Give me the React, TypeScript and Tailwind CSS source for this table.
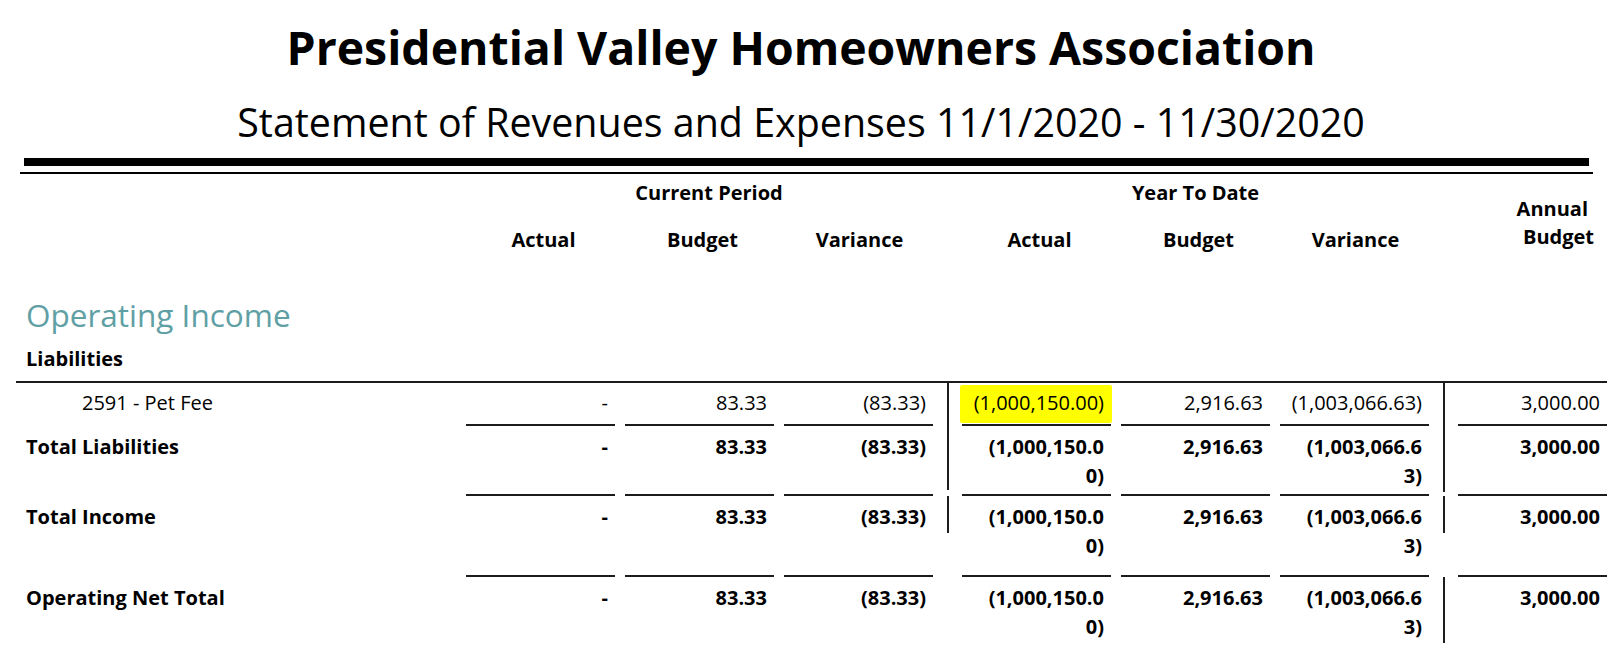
import React from 'react';

type Row = {
  label: string;
  indent?: boolean;
  bold?: boolean;
  values: string[];
  height: string;
  pad: string;
  underline: boolean;
  sepA: string | null;
  sepB: string | null;
};

const rows: Row[] = [
  {
    label: '2591 - Pet Fee',
    indent: true,
    values: ['-', '83.33', '(83.33)', '(1,000,150.00)', '2,916.63', '(1,003,066.63)', '3,000.00'],
    height: 'h-[43px]',
    pad: 'pt-[5px]',
    underline: true,
    sepA: 'h-full',
    sepB: 'h-full',
  },
  {
    label: 'Total Liabilities',
    bold: true,
    values: ['-', '83.33', '(83.33)', '(1,000,150.0\n0)', '2,916.63', '(1,003,066.6\n3)', '3,000.00'],
    height: 'h-[70px]',
    pad: 'pt-[6px]',
    underline: true,
    sepA: 'h-[64px]',
    sepB: 'h-[66px]',
  },
  {
    label: 'Total Income',
    bold: true,
    values: ['-', '83.33', '(83.33)', '(1,000,150.0\n0)', '2,916.63', '(1,003,066.6\n3)', '3,000.00'],
    height: 'h-[81px]',
    pad: 'pt-[6px]',
    underline: true,
    sepA: 'h-[37px]',
    sepB: 'h-[37px]',
  },
  {
    label: 'Operating Net Total',
    bold: true,
    values: ['-', '83.33', '(83.33)', '(1,000,150.0\n0)', '2,916.63', '(1,003,066.6\n3)', '3,000.00'],
    height: 'h-[82px]',
    pad: 'pt-[6px]',
    underline: false,
    sepA: null,
    sepB: 'h-[66px]',
  },
];

function Cell({ value, row, highlight }: { value: string; row: Row; highlight?: boolean }) {
  return (
    <div className="w-[159px] px-[5px] h-full">
      <div
        className={`relative h-full text-right pr-[7px] whitespace-pre-line ${row.pad} ${
          row.underline ? 'border-b-2 border-[#1c1c1c]' : ''
        }`}
      >
        {highlight && <div className="absolute left-[-2px] top-[2px] w-[152px] h-[38px] bg-[#ffff00] rounded-[2px]" />}
        <span className="relative">{value}</span>
      </div>
    </div>
  );
}

function Sep({ h }: { h: string | null }) {
  return (
    <div className="w-[19px] pl-[9px] h-full">
      {h && <div className={`w-[2px] bg-[#1c1c1c] ${h}`} />}
    </div>
  );
}

export default function App() {
  return (
    <div className="w-[1621px] h-[659px] overflow-hidden bg-white text-black font-['Open_Sans',sans-serif]">
      {/* Heading */}
      <div className="w-[1602px] pt-[19px] text-center">
        <h1 className="text-[46.4px] leading-[56px] font-bold">Presidential Valley Homeowners Association</h1>
        <h2 className="mt-[23px] text-[39.4px] leading-[48px]">
          Statement of Revenues and Expenses 11/1/2020 - 11/30/2020
        </h2>
      </div>
      <div className="mt-[12px] ml-[24px] w-[1565px] h-[8px] bg-black" />
      <div className="mt-[6px] ml-[20px] w-[1573px] h-[2px] bg-black" />

      {/* Column headers */}
      <div className="mt-[5px] ml-[16px] flex text-[20px] leading-[28px] font-bold">
        <div className="w-[445px]" />
        <div className="w-[496px] flex flex-col">
          <div className="text-center">Current Period</div>
          <div className="mt-[19px] flex">
            <div className="w-[159px] pl-[6px] text-center">Actual</div>
            <div className="w-[159px] pl-[6px] text-center">Budget</div>
            <div className="w-[159px] pl-[2px] text-center">Variance</div>
            <div className="w-[19px]" />
          </div>
        </div>
        <div className="w-[477px] flex flex-col">
          <div className="text-center">Year To Date</div>
          <div className="mt-[19px] flex">
            <div className="w-[159px] pl-[6px] text-center">Actual</div>
            <div className="w-[159px] pl-[6px] text-center">Budget</div>
            <div className="w-[159px] pl-[2px] text-center">Variance</div>
          </div>
        </div>
        <div className="w-[19px]" />
        <div className="w-[159px] pt-[16px] pr-[18px] text-right">
          <div className="pr-[6px]">Annual</div>
          <div>Budget</div>
        </div>
      </div>

      {/* Section */}
      <div className="ml-[16px] pl-[10px]">
        <div className="mt-[41px] text-[31.5px] leading-[40px] text-[#5fa0a5]">Operating Income</div>
        <div className="mt-[10px] text-[20px] leading-[28px] font-bold">Liabilities</div>
      </div>

      <div className="mt-[8px] ml-[16px] w-[1591px] border-t-2 border-[#1c1c1c]" />
      <div className="ml-[16px] text-[20px] leading-[29px]">
        {rows.map((row, i) => (
          <div key={i} className={`flex ${row.height} ${row.bold ? 'font-bold' : ''}`}>
            <div className={`w-[445px] ${row.pad} ${row.indent ? 'pl-[66px]' : 'pl-[10px]'}`}>{row.label}</div>
            <Cell value={row.values[0]} row={row} />
            <Cell value={row.values[1]} row={row} />
            <Cell value={row.values[2]} row={row} />
            <Sep h={row.sepA} />
            <Cell value={row.values[3]} row={row} highlight={i === 0} />
            <Cell value={row.values[4]} row={row} />
            <Cell value={row.values[5]} row={row} />
            <Sep h={row.sepB} />
            <Cell value={row.values[6]} row={row} />
          </div>
        ))}
      </div>
    </div>
  );
}
